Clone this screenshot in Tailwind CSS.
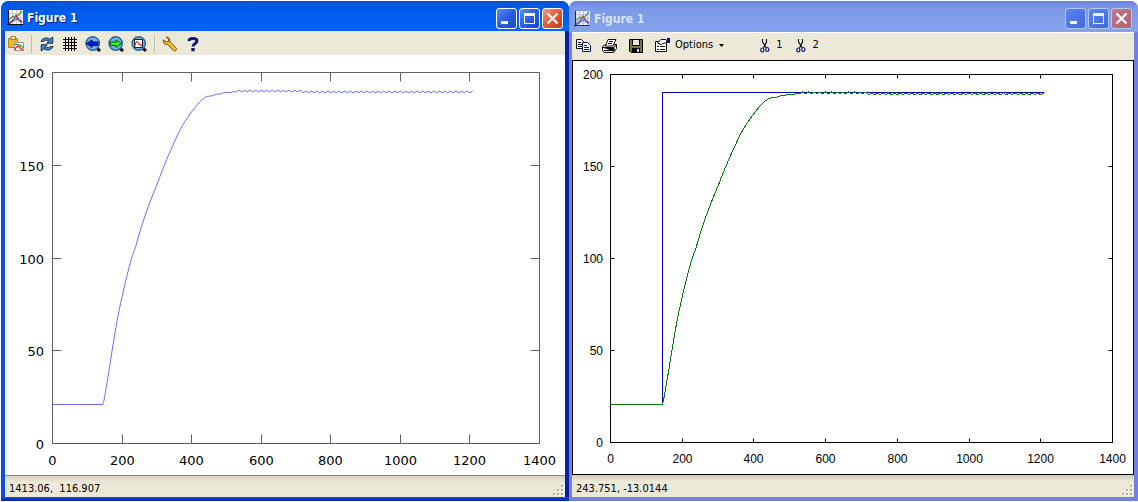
<!DOCTYPE html>
<html lang="en">
<head>
<meta charset="utf-8">
<title>Figure 1</title>
<script src="https://cdn.jsdelivr.net/npm/@tailwindcss/browser@4"></script>
</head>
<body class="bg-[#f8fcff]">
<svg class="hidden" aria-hidden="true">
  <symbol id="app" viewBox="0 0 16 16">
    <path fill="#fff" d="M1 0h15v15H1z"/>
    <path fill="none" stroke="#c9ccd4" d="M5.5 0v15M9.5 0v15M13.5 0v15M1 3.5h15M1 7.5h15M1 11.5h15"/>
    <path fill="none" stroke="#2ca63c" stroke-width="1.2" d="M2 10l4-4 3 2 6-7"/>
    <path fill="none" stroke="#d0304a" stroke-width="1.2" d="M2 13l4-3 3-5 3 5 3 1"/>
    <path fill="none" stroke="#2d50d8" stroke-width="1.2" d="M2 14l5-4 4-1 4 4"/>
    <path fill="none" stroke="#111" d="M1.5 0v15.3M0 14.5h16"/>
  </symbol>
  <symbol id="lens" viewBox="0 0 16 16">
    <path stroke="#111" stroke-width="3" d="M11.5 12l3.5 3"/>
    <circle cx="7.7" cy="7.5" r="6.7" fill="#69b3e6" stroke="#2d6797" stroke-width="1.4"/>
  </symbol>
  <symbol id="scissors" viewBox="0 0 10 16">
    <path fill="none" stroke="#111" stroke-width="1.2" d="M2.5 1v3l4 6M6.500 1v3l-3 6"/>
    <ellipse cx="2.300" cy="12" rx="1.600" ry="2" fill="none" stroke="#10107c" stroke-width="1.2"/>
    <ellipse cx="7.300" cy="11.500" rx="1.600" ry="2" fill="none" stroke="#10107c" stroke-width="1.2"/>
  </symbol>
  <symbol id="grip" viewBox="0 0 12 12">
    <path fill="#fff" d="M9 1h2v2H9zM5 5h2v2H5zM9 5h2v2H9zM1 9h2v2H1zM5 9h2v2H5zM9 9h2v2H9z"/>
    <path fill="#b5b09a" d="M8 0h2v2H8zM4 4h2v2H4zM8 4h2v2H8zM0 8h2v2H0zM4 8h2v2H4zM8 8h2v2H8z"/>
  </symbol>
</svg>

<main class="grid h-screen grid-cols-[568fr_569fr] pt-px pb-px pl-px">
  <!-- Active window -->
  <section class="flex min-w-0 flex-col overflow-hidden rounded-t-lg bg-linear-to-r from-[#0f4ce0] via-[#1a5ff0] to-[#0420a8] px-1" aria-label="Figure 1, active">
    <header class="-mx-1 flex h-[30px] shrink-0 items-center bg-linear-to-b from-[#0a50cf] from-0% via-[#0058ea] via-20% to-[#0463fb] to-90% pt-1 pr-1.5 pl-1.5">
      <svg class="size-4"><use href="#app"/></svg>
      <h1 class="ml-1 flex-1 font-['DejaVu_Sans_Condensed','DejaVu_Sans',sans-serif] text-xs font-bold text-white [text-shadow:1px_1px_1px_#0a1f80]">Figure 1</h1>
      <div class="flex gap-[2px]">
        <button aria-label="Minimize" class="size-[21px] rounded-[3px] border border-white bg-linear-to-br from-[#5c8bf3] via-[#2a5ee0] to-[#1a48c8]"><svg viewBox="0 0 19 19"><path fill="#fff" d="M4 12h7v3H4z"/></svg></button>
        <button aria-label="Maximize" class="size-[21px] rounded-[3px] border border-white bg-linear-to-br from-[#5c8bf3] via-[#2a5ee0] to-[#1a48c8]"><svg viewBox="0 0 19 19"><path fill="#fff" fill-rule="evenodd" d="M4 4h11v11H4zM5 7v7h9V7z"/></svg></button>
        <button aria-label="Close" class="size-[21px] rounded-[3px] border border-white bg-linear-to-br from-[#f09a80] via-[#e05a38] to-[#c23a18]"><svg viewBox="0 0 19 19"><path stroke="#fff" stroke-width="2.2" d="M4.500 4.500l10 10M14.500 4.500l-10 10"/></svg></button>
      </div>
    </header>
    <div role="toolbar" class="flex h-6 shrink-0 items-center bg-[#ece9d8] pt-[2px] pl-[2px]">
      <button aria-label="Copy"><svg class="size-[18px]" viewBox="0 0 18 18"><path fill="#f0b92c" stroke="#9a6f10" stroke-width=".8" d="M1.500 3.500h9v9h-9z"/><path fill="#fbe79a" stroke="#8b6414" stroke-width=".8" d="M4 1.500h4.500v3H4z"/><path fill="#fff" stroke="#999" d="M7.500 7.500h9v8h-9z"/><path fill="none" stroke="#22a52c" stroke-width="1.300" d="M8 9.500c4-1 6 1 8 3"/><path fill="none" stroke="#e0242c" stroke-width="1.300" d="M8 15c1-4 3-5 5-2l3 2"/></svg></button>
      <span class="ml-1.5 h-[18px] w-px bg-[#c4c0ae]"></span>
      <button aria-label="Refresh" class="ml-[7px]"><svg class="size-4" viewBox="0 0 16 16"><path fill="#3b82c4" stroke="#102c58" stroke-width=".9" d="M2 5.500C3 2 8 .8 11 3.200L13.800 1v6.300H7.800L9.600 5.200C7.500 3.800 5.500 4.300 4.500 5.500zM14 10.500c-1 3.500-6 4.700-9 2.300L2.200 15V8.700h6l-1.800 2.100c2.100 1.400 4.100.9 5.100-.3z"/></svg></button>
      <button aria-label="Grid" class="ml-[7px]"><svg class="size-4" viewBox="0 0 16 16"><path stroke="#000" stroke-width="1" d="M3.500 1v14M6.500 1v14M9.500 1v14M12.500 1v14M1 3.500h14M1 6.500h14M1 9.500h14M1 12.500h14"/></svg></button>
      <button aria-label="Previous zoom" class="ml-[7px]"><svg class="size-4" viewBox="0 0 16 16"><use href="#lens"/><path fill="#0a14e0" stroke="#061070" d="M1.500 7.500L7 4v2h6v3.500H7v2z"/></svg></button>
      <button aria-label="Next zoom" class="ml-[7px]"><svg class="size-4" viewBox="0 0 16 16"><use href="#lens"/><path fill="#2df02d" stroke="#0a5a14" d="M13.500 7.500L8 4v2H2.500v3.500H8v2z"/></svg></button>
      <button aria-label="Autoscale" class="ml-[7px]"><svg class="size-4" viewBox="0 0 16 16"><use href="#lens"/><path fill="#fff" stroke="#222" d="M3.500 3.500h8v8h-8z"/><path fill="none" stroke="#e03030" stroke-width="1.200" d="M4 10c1-6 3-5 4-2l3 2"/></svg></button>
      <span class="ml-[7px] h-[18px] w-px bg-[#c4c0ae]"></span>
      <button aria-label="Configure" class="ml-[7px]"><svg class="size-4" viewBox="0 0 16 16"><path fill="#f5b72e" stroke="#7a5209" d="M4 1l2.500 2v2.500L4.500 6 1.500 4c-.8 3 1 5 4 4.500l6 6c2 1.500 4-1 2.500-2.800L8 6C8.500 3 7 1 4 1z"/></svg></button>
      <button aria-label="Help" class="ml-2"><svg class="size-4" viewBox="0 0 16 16"><path fill="none" stroke="#15157a" stroke-width="3" d="M3 5C3 1.500 11 1.500 11 5c0 2.500-4 2.500-4 5.500"/><path fill="#15157a" d="M5.300 12h3.400v3.200H5.300z"/></svg></button>
    </div>
    <div class="min-h-0 flex-1 bg-white">
      <svg id="plotA" class="size-full" viewBox="0 0 560 420" role="img" aria-label="Measured response" font-family="'DejaVu Sans', sans-serif" font-size="13"></svg>
    </div>
    <footer class="flex h-[22px] shrink-0 items-end justify-between border-t border-[#8a877a] bg-linear-to-b from-[#d8d4c4] to-[#ece9d8] to-30%">
      <p class="pl-1 font-['DejaVu_Sans_Condensed','DejaVu_Sans',sans-serif] text-[11px] leading-4 whitespace-pre">1413.06,  116.907</p>
      <svg class="size-3"><use href="#grip"/></svg>
    </footer>
    <div class="-mx-1 h-1 shrink-0 bg-linear-to-b from-[#1450e0] to-[#0420a0]"></div>
  </section>

  <!-- Inactive window -->
  <section class="flex min-w-0 flex-col overflow-hidden rounded-t-lg bg-[#7480dc] pr-1 pb-1 pl-[3px]" aria-label="Figure 1, inactive">
    <header class="-mr-1 -ml-[3px] flex h-[31px] shrink-0 items-center bg-linear-to-b from-[#6a80d8] from-0% via-[#7c98e6] via-20% to-[#84a2ec] to-90% pt-1 pr-1.5 pl-[5px]">
      <svg class="size-4 opacity-80"><use href="#app"/></svg>
      <h1 class="ml-1 flex-1 font-['DejaVu_Sans_Condensed','DejaVu_Sans',sans-serif] text-xs font-bold text-[#d8e4f8]">Figure 1</h1>
      <div class="flex gap-[2px]">
        <button aria-label="Minimize" class="size-[21px] rounded-[3px] border border-[#b5c6f2] bg-linear-to-br from-[#5f86ea] to-[#3f68dc]"><svg viewBox="0 0 19 19"><path fill="#fff" d="M4 12h7v3H4z"/></svg></button>
        <button aria-label="Maximize" class="size-[21px] rounded-[3px] border border-[#b5c6f2] bg-linear-to-br from-[#5f86ea] to-[#3f68dc]"><svg viewBox="0 0 19 19"><path fill="#e6eeff" fill-rule="evenodd" d="M4 4h11v11H4zM5 7v7h9V7z"/></svg></button>
        <button aria-label="Close" class="size-[21px] rounded-[3px] border border-[#b5c6f2] bg-linear-to-br from-[#bd7a8c] to-[#b0606e]"><svg viewBox="0 0 19 19"><path stroke="#fff" stroke-width="2.200" d="M4.500 4.500l10 10M14.500 4.500l-10 10"/></svg></button>
      </div>
    </header>
    <div role="toolbar" class="flex h-7 shrink-0 items-center border-t border-white bg-[#ece9d8] pb-[2px] pl-1 font-['DejaVu_Sans_Condensed','DejaVu_Sans',sans-serif] text-[11px]">
      <button aria-label="Copy"><svg class="size-4" viewBox="0 0 16 16"><path fill="#fff" stroke="#111" d="M.5 1.500h5l2 2v7h-7z"/><path stroke="#111" d="M2 4.500h3M2 6.500h4M2 8.500h4"/><path fill="#fff" stroke="#10107c" d="M6.500 4.500h5l3 3v6h-8z"/><path stroke="#10107c" d="M8 7.500h3M8 9.500h5M8 11.500h5"/></svg></button>
      <button aria-label="Print" class="ml-2.5"><svg class="size-4" viewBox="0 0 16 16"><path fill="#ece9d8" stroke="#111" d="M.5 8.500l3-2h11v4l-3 4H2.500l-2-2z"/><path fill="#fff" stroke="#111" d="M6 1.500h8l-3 6.500H3.500z"/><path stroke="#111" d="M7 3.500h4M6 5.500h4M1 9.500h11v4M12 9.500l2.500-3M2 12.500h9"/></svg></button>
      <button aria-label="Save" class="ml-2.5"><svg class="size-4" viewBox="0 0 16 16"><path fill="#77782a" stroke="#000" d="M1.500 1.500h13v13H3l-1.500-1.500z"/><path fill="#ece9d8" stroke="#000" d="M4.500 1.500h7v6h-7z"/><path fill="#000" d="M4 10h8v5H4z"/><path fill="#ece9d8" d="M9 11h2v3H9z"/></svg></button>
      <button class="ml-2.5 flex items-center"><svg class="size-[17px]" viewBox="0 0 17 17"><path fill="#fff" stroke="#111" d="M1.500 4.500h11v10h-11z"/><path stroke="#111" d="M3 9.500h2M6 9.500h5M3 12.500h2M6 12.500h5"/><path fill="#fff" stroke="#111" d="M3.500 6L7 2.500h5l1 3-4 1-2 1z"/><path fill="#10107c" d="M13 1h3v5h-3z"/></svg><span class="ml-1">Options</span><svg class="ml-1.5 h-[3px] w-[5px]" viewBox="0 0 5 3"><path d="M0 0h5L2.500 3z"/></svg></button>
      <button class="ml-9 flex items-center gap-1.5"><svg class="h-4 w-2.5"><use href="#scissors"/></svg>1</button>
      <button class="ml-3.5 flex items-center gap-1.5"><svg class="h-4 w-2.5"><use href="#scissors"/></svg>2</button>
    </div>
    <div class="min-h-0 flex-1 border border-black bg-white">
      <svg id="plotB" class="size-full" viewBox="0 0 560 413" role="img" aria-label="Setpoint and measured response" font-family="'Liberation Sans', sans-serif" font-size="12"></svg>
    </div>
    <footer class="flex h-[22px] shrink-0 items-end justify-between bg-linear-to-b from-[#d0ccbc] to-[#ece9d8] to-30%">
      <p class="pl-1 font-['DejaVu_Sans_Condensed','DejaVu_Sans',sans-serif] text-[11px] leading-4">243.751, -13.0144</p>
      <svg class="size-3"><use href="#grip"/></svg>
    </footer>
  </section>
</main>

<script>
// Temperature response: [time, value]
const base = 20.9;
const rise = [[145,base],[150,25.2],[163,40],[173,52],[186,66.5],[199,78.3],[211,88],[223,97],[232,102.5],[238,105.5],
  [251,114],[262,120.5],[280,130],[303,141],[320,149.3],[338,157.3],[366.6,169],[395.3,177.6],[424,184.3],[443,187],
  [456,187.3],[472,188.3],[482,188.4],[496,189.3],[510,189.1],[520,189.7]];

function curve(px, py) {
  const p = rise.map(([x, y]) => [px(x), py(y)]);
  p[0][1] = Math.floor(py(base)) + 0.5;
  let d = `M${px(0)} ${p[0][1]}L${p[0]}`;
  for (let i = 0; i < p.length - 1; i++) {
    const a = p[Math.max(i - 1, 0)], b = p[i], c = p[i + 1], e = p[Math.min(i + 2, p.length - 1)];
    d += `C${b[0] + (c[0] - a[0]) / 6} ${b[1] + (c[1] - a[1]) / 6} ${c[0] - (e[0] - b[0]) / 6} ${c[1] - (e[1] - b[1]) / 6} ${c}`;
  }
  for (let t = 528, k = 0; t <= 1210; t += 8, k++) {
    const mean = t < 720 ? 190 : 189.5;
    d += `L${px(t)} ${py(mean + (k % 2 ? 0.5 : -0.5))}`;
  }
  return d;
}

function plot(id, { x0, x1, y0, y1, tick, axis, line, labelX, labelY, drop, step }) {
  const px = v => x0 + v / 1400 * (x1 - x0), py = v => y0 - v / 200 * (y0 - y1);
  let ticks = "", text = "";
  for (let v = 0; v <= 1400; v += 200) {
    const x = Math.floor(px(v)) + 0.5;
    ticks += `M${x} ${y0}v${-tick}M${x} ${y1}v${tick}`;
    text += `<text x="${x}" y="${labelX}" text-anchor="middle">${v}</text>`;
  }
  for (let v = 0; v <= 200; v += 50) {
    const y = Math.floor(py(v)) + 0.5;
    ticks += `M${x0} ${y}h${tick}M${x1} ${y}h${-tick}`;
    text += `<text x="${labelY}" y="${y + drop}" text-anchor="end">${v}</text>`;
  }
  const flat = Math.floor(py(base)) + 0.5;
  document.getElementById(id).innerHTML =
    `<path d="M${x0} ${y0}H${x1}V${y1}H${x0}Z${ticks}" fill="none" stroke="${axis}"/>` +
    (step ? `<path d="M${px(0)} ${flat}H${Math.floor(px(146)) + 0.5}V${Math.floor(py(190)) + 0.5}H${px(1210)}" fill="none" stroke="#0000b4"/>` : "") +
    `<path d="${curve(px, py)}" fill="none" stroke="${line}"${step ? ' shape-rendering="crispEdges"' : ""}/><g>${text}</g>`;
}

plot("plotA", { x0: 47.5, x1: 534.5, y0: 388.5, y1: 17.5, tick: 9, axis: "#606060", line: "#6c6cf0", labelX: 410, labelY: 39, drop: 5 });
plot("plotB", { x0: 37.5, x1: 539.5, y0: 381.5, y1: 13.5, tick: 4, axis: "#000", line: "#0a7a14", labelX: 402, labelY: 30, drop: 4, step: true });
</script>
</body>
</html>
